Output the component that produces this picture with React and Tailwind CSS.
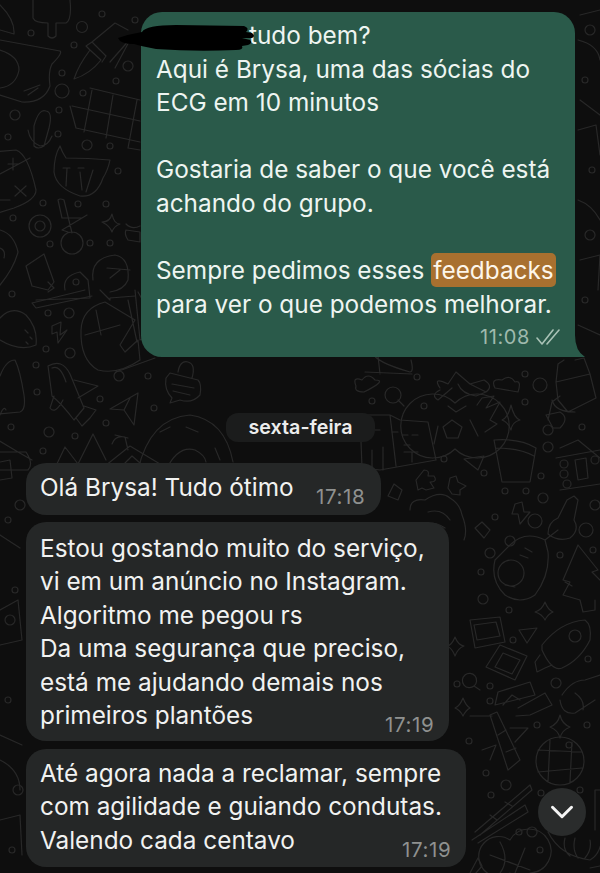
import React from 'react';
import { ChevronDown } from 'lucide-react';

const dots = [
  [82,27,5.5],[31,33,3],[102,14,3],[74,45,3],[62,73,3],[62,91,7],[83,93,3],[135,20,3],[128,66,5],[116,81,3],[59,110,3],[15,115,5],
  [8,137,3],[87,145,5],[110,146,3],[58,134,3],[118,171,3],[43,203,3],[78,204,3],[106,204,3],[13,218,3],[90,243,3],[110,243,3],[50,244,3],
  [76,282,3],[12,294,3],[48,313,3],[69,313,5],[46,349,3],[70,353,5],[36,365,3],[37,392,3],[100,399,3],[119,376,5],[148,376,3],[154,408,3],[11,427,3],[49,432,5],[106,423,3],[75,436,3],[43,451,3],
  [20,505,5],[8,520,3],
  [417,377,3],[372,401,3],[424,406,3],[525,374,3],[540,385,7],[525,402,3],[582,427,3],[548,430,5],[548,447,5],[444,459,3],[484,473,3],[541,476,3],[505,491,3],[526,491,3],[543,498,5],[595,505,5],[495,517,3],[535,521,7],[586,530,7],
  [510,541,5],[490,553,5],[481,572,3],[593,550,3],[560,555,3],[483,599,5],[509,610,3],[513,640,3],[588,659,3],[457,684,3],[490,686,3],[556,683,5],[490,701,3],
  [537,725,3],[587,725,3],[569,745,3],[469,741,3],[486,773,3],[506,785,5],[491,795,3],[580,790,3],[541,793,3],[519,832,3],[532,832,5],[540,850,3],
  [590,30,5],[585,80,3],[592,170,3],[590,235,5],[585,300,3],[10,620,5],[15,590,3],[8,700,3],[18,790,5],[12,850,3],
];

const paths = [
  // lightbulb, nib, popsicle
  'M0 40 L60 51 Q63 53 52 64 Q48 72 50 86 Q44 103 22 102 L0 95',
  'M0 50 Q19 56 19 70 Q16 86 0 88 M24 91 L40 85 M28 95 L38 88',
  'M74 79 Q78 66 90 50 L101 60 Q90 74 74 79 M90 50 L86 46 L92 42 L106 56 L102 62 M92 42 L115 23 L128 30 M110 62 L131 38 L115 68',
  'M33 0 L33 18 Q35 23 48 23 L48 36 Q52 40 56 36 L56 23 L66 23 Q72 20 70 0',
  'M0 5 Q15 20 14 34 L0 30',
  // grid
  'M90 88 L140 100 M72 106 L140 121 M70 106 L76 128 L140 142 M92 90 L84 132 M113 95 L106 138 M137 100 L128 148 L140 150',
  // mic, cat
  'M34 126 Q39 108 46 111 Q53 112 49 128 L44 146 Q38 150 34 146 Z M28 130 Q30 142 40 146 Q48 146 52 136',
  'M60 146 Q62 152 66 158 Q88 158 110 160 Q108 170 103 178 Q96 198 80 196 Q56 188 54 172 Q54 156 60 146 M63 168 L70 168 M67 168 L66 186 M78 168 L84 168 M93 170 L86 192 M80 172 L82 190',
  // calculator
  'M-8 152 L16 150 Q28 154 36 190 Q36 200 14 208 L-8 215 M0 174 L30 158 M13 158 L13 170 M8 164 L18 164 M15 186 L26 196 M26 186 L15 196 M0 200 L10 200',
  // scissors
  'M58 200 L62 218 L82 218 L87 215 L62 230 L68 232 M58 200 Q60 198 64 200 L72 233 M40 215 A11 11 0 1 0 40 237 A11 11 0 1 0 40 215 M40 221 A5 5 0 1 0 40 231 A5 5 0 1 0 40 221 M72 232 A11 11 0 1 0 72 254 A11 11 0 1 0 72 232',
  'M112 214 Q114 224 120 224 Q114 226 112 232 Q110 226 102 222 Q110 222 112 214',
  'M126 224 Q132 230 140 226 M126 230 L140 232 L140 242 L128 240 Q124 234 126 230',
  // paw
  'M0 230 Q14 234 18 252 Q14 268 0 285 M0 248 Q6 250 4 258',
  // tube
  'M26 266 L44 254 L54 282 L48 290 L32 286 Z M48 282 L54 288 L48 292',
  // lady
  'M93 280 Q90 258 115 255 Q130 258 128 280 Q124 290 110 292 M107 268 L130 270 M110 278 L120 270',
  'M65 290 Q62 276 80 272 L88 280 L90 298 L36 300',
  // taco, bolt
  'M0 318 Q12 305 26 315 Q38 328 36 345 Q20 352 0 340 M25 330 L28 333 M30 337 L32 339 M26 342 L28 344',
  'M52 326 L61 322 L60 335 L67 330 L58 343 L57 332 L52 334 Z',
  // top mouse block
  'M32 303 L85 290 M32 303 L36 308 L92 296',
  'M100 290 L110 300 L110 298 L135 296 M105 302 Q82 308 81 330 Q80 360 98 370 Q118 375 140 360 L138 340 L125 352 L120 345 L135 320 L115 308 Z M85 335 L120 325 M96 310 L101 335 M128 300 L137 342',
  'M135 290 L140 340 L160 330 L138 292',
  'M116 372 L155 358',
  // rocket
  'M48 366 Q62 358 70 374 L84 408 L74 420 Q62 404 52 396 Z M52 368 Q60 364 66 382 M74 380 L98 386 L78 398 M54 396 L50 408 Q55 415 63 400 M76 418 L82 426 L90 418 L96 410 L84 406',
  'M0 376 Q6 360 15 360 Q20 370 24 395 Q26 410 20 412 L-2 414 M0 415 Q4 405 6 410',
  // plane
  'M110 409 L138 393 L134 425 L124 410 Z M124 410 L130 398',
  // chat lock
  'M170 373 L198 380 Q202 384 200 395 Q192 404 180 400 L170 403 L172 398 Q164 390 166 378 Z M172 384 L194 388 M173 391 L190 395 M178 372 Q180 360 188 362 Q196 364 192 378',
  // rings
  'M138 470 Q150 418 190 415 Q225 420 233 462 M160 432 L170 427 M186 427 L198 432 M215 448 L220 460 M166 470 Q178 445 195 450 Q205 455 206 462',
  // house + mountains
  'M100 470 L130 446 L170 470 M118 470 L132 456 L148 470 M54 470 L65 447 L78 464 L93 434 L106 460 M112 444 Q115 435 125 437 L128 450 M115 435 L128 438',
  'M-2 440 L18 452 L32 460 M0 452 L26 452 Q34 464 28 470 L0 470 M0 462 L10 460 L12 478 L0 480',
  // top right of date band
  'M373 353 Q375 362 410 372 Q414 372 411 360 M378 356 L380 374 M365 372 L412 374',
  'M356 386 Q352 376 362 380 Q368 372 375 380 Q388 380 364 392 Q354 392 356 386',
  'M393 387 A8 8 0 1 0 393 403 A8 8 0 1 0 393 387 M398 400 L404 406',
  'M440 388 Q432 376 448 384 L456 372 L470 384 L484 380 Q494 386 486 392 L470 384 M440 390 Q430 395 438 400 L452 388 M486 392 L476 396 Q462 394 458 384',
  'M495 388 Q490 378 502 380 Q510 374 515 382 Q522 380 518 392 Z',
  // football
  'M455 403 A32 32 0 1 0 455 449 A32 32 0 1 0 455 403 Z M452 420 L462 427 L458 438 L447 438 L443 427 Z M448 406 L456 412 L466 406 M470 420 L478 436 M438 426 L434 444 M477 405 L482 398 L494 396 L486 408 L500 402 L490 420 L497 424 L485 432',
  'M511 405 Q514 418 520 420 Q512 422 511 430 Q508 422 502 420 Q508 418 511 405',
  'M548 420 L552 402 L560 396 M553 428 L546 415 L560 412 Q570 418 560 428 Z',
  // bottle + banana
  'M556 382 L558 364 L564 360 M556 382 L590 374 L596 398 L568 412 L558 400 Z M575 360 L584 358 L590 374 M552 400 Q555 412 575 412',
  // building
  'M360 415 L390 415 L400 420 L428 422 L436 460 L380 470 L362 468 Z M390 415 L396 466 M372 450 L372 470 M383 447 L383 470 M412 452 L412 462 M404 452 L418 452',
  'M375 430 L380 430 M392 432 L398 432 M402 435 L408 435 M412 435 L418 435 M404 445 L410 445',
  // pot, plane, cross
  'M494 440 Q520 438 536 448 L530 482 L502 482 Z M496 448 Q520 448 534 456',
  'M464 459 L484 456 L478 470 Z',
  'M450 478 L456 476 L458 482 L466 486 L460 490 L460 495 L452 494 L448 488 Z',
  'M424 470 Q430 470 428 476 L434 476 Q438 482 430 482 L434 488 L426 490 L422 488 L418 490 L416 480 Z',
  // house logs
  'M560 448 L578 440 L600 458 M556 458 L600 450 M560 490 L600 484 M575 460 L586 458 L588 478 L578 480 Z',
  'M564 460 A4 4 0 1 0 564 468 A4 4 0 1 0 564 460 M564 470 A4 4 0 1 0 564 478 A4 4 0 1 0 564 470 M567 480 A4 4 0 1 0 567 488 A4 4 0 1 0 567 480 M595 456 A4 4 0 1 0 595 464 A4 4 0 1 0 595 456',
  // die, big flower
  'M394 484 L402 490 L398 500 L388 496 Z',
  'M410 510 Q410 498 425 500 Q440 490 450 498 Q460 504 462 515 Q468 530 464 540 M428 512 Q442 508 450 520 M420 530 Q430 518 445 528',
  'M515 504 L522 502 L524 512 L530 512 L520 524 L518 514 L512 514 Z',
  'M567 500 L574 496 L578 500 L574 520 Q580 530 570 538 Q558 542 548 534 Q548 522 558 518 Z',
  'M475 528 L482 522 L490 530 L484 538 Z',
  // avocado
  'M545 540 Q525 530 510 545 L495 560 Q490 580 505 595 Q520 605 535 595 Q550 575 548 552 Z M545 540 L558 530 M498 573 A13 13 0 1 0 524 573 A13 13 0 1 0 498 573 M520 555 L528 558 M525 548 L532 552 M505 585 L515 587',
  'M578 545 L598 570 L592 572 L600 580 M578 545 L563 580 L570 582 L563 595 L580 600 L583 612 L595 610 L595 600 M565 582 L572 586',
  'M545 602 Q548 610 553 612 Q548 614 545 620 Q542 614 535 612 Q542 610 545 602',
  // photos
  'M470 620 L500 617 L505 642 L475 648 Z M474 625 L496 622 L500 636 L477 640 Z',
  'M500 645 L527 656 L515 680 L486 667 Z M503 653 L520 660 L512 674 L495 667 Z',
  'M519 630 L537 628 L527 643 Z',
  'M455 637 Q458 645 464 646 Q458 648 455 656 Q452 648 447 646 Q452 645 455 637',
  'M465 675 A7 7 0 1 0 474 686 A7 7 0 1 0 465 675 M474 686 L480 690',
  'M498 692 L530 682 L535 695 L495 705 Z M503 705 L512 695 L520 700',
  'M518 708 L545 693 L552 705 L530 715 L516 716',
  'M463 698 Q466 706 470 708 Q466 710 463 716 Q460 710 455 708 Q460 706 463 698',
  // rocket right
  'M542 645 Q560 622 585 620 Q592 625 590 640 Q580 660 562 668 Q552 672 542 650 Z M575 630 A6 6 0 1 0 575 642 A6 6 0 1 0 575 630 M540 655 L535 662 L537 672 L545 668 L552 665',
  // heart / sock
  'M562 695 Q572 680 585 680 L600 675 M560 700 Q562 715 575 713 L595 700 M575 693 Q585 700 583 710',
  // bamboo + star
  'M490 715 L497 712 L520 760 L508 770 Z M498 735 L506 730 M506 752 L516 748 M470 716 L492 716 M482 750 L496 745 L490 760 M510 728 L528 728 L515 742',
  'M560 715 Q562 724 570 727 Q562 730 560 738 Q558 730 550 727 Q558 724 560 715',
  'M600 790 L595 790 L595 830',
  // globe
  'M560 737 A24 24 0 1 0 560 785 A24 24 0 1 0 560 737 M538 750 L582 752 M538 772 L582 768 M550 740 L548 782 M572 742 L570 782',
  // chopsticks + basketball
  'M475 832 L530 785 L532 790 L480 835 M472 840 L525 805 L528 812 L478 843 M505 802 L512 806 M490 815 L497 820',
  'M510 840 A20 20 0 1 0 510 873 M510 840 A22 22 0 1 1 530 873 M490 855 L530 870 M500 842 Q510 860 500 873 M525 848 L515 873',
  'M470 873 L478 858 L482 866 L476 873',
  'M548 832 Q560 856 590 860 Q600 855 602 838 M565 838 Q562 850 570 856 M575 838 Q572 850 578 858 M590 840 Q592 850 585 858',
  'M590 868 L600 866',
  // left strip low
  'M0 535 L20 548 M0 610 L18 600 L22 640 L0 645 M0 735 L22 745 M0 760 Q20 770 20 790 M0 820 L20 815 L22 855',
  // right strip high
  'M580 15 L600 10 M578 40 Q598 45 600 60 M580 100 L600 115 M578 130 L596 125 L600 155 M578 200 Q592 205 600 220 M580 260 L600 255 L598 290 M578 325 L600 335',
];

const Msg = ({ time, className, timeClass, lines }) => (
  <div className={`ml-[26px] bg-[#252727] rounded-[20px] pl-[15px] relative ${className}`}>
    {lines.map((l) => (
      <div key={l} className="h-[33.4px] leading-[33.4px] whitespace-nowrap -ml-[1px]">{l}</div>
    ))}
    <span className={`absolute text-[20.5px] tracking-[0.6px] leading-[25px] text-[#8f9190] ${timeClass}`}>{time}</span>
  </div>
);

export default function App() {
  return (
    <div
      className="relative w-[600px] h-[873px] overflow-hidden bg-[#0e0e0e] text-[24.35px] text-[#f1f2f1] flex flex-col items-start"
      style={{ fontFamily: 'Inter, "Liberation Sans", sans-serif' }}
    >
      {/* wallpaper */}
      <svg className="absolute inset-0" width="600" height="873" fill="none" stroke="#282828" strokeWidth="1.2" strokeLinecap="round" strokeLinejoin="round">
        {paths.map((d, i) => <path key={i} d={d} />)}
        {dots.map(([x, y, r], i) => <circle key={i} cx={x} cy={y} r={r} />)}
      </svg>

      {/* outgoing */}
      <div className="relative self-end mr-[25px] mt-[12px] w-[434px] h-[345px] bg-[#2a5a4a] rounded-[21px] pl-[15px] pt-[7px] text-[#eef5f1]">
        <svg className="absolute right-[-10px] bottom-0" width="30" height="22" viewBox="0 0 30 22">
          <path d="M0 0 L20 0 Q20 16 30 22 L0 22 Z" fill="#2a5a4a" />
        </svg>
        <div className="relative whitespace-nowrap">
          <div className="h-[33.6px] leading-[33.6px] pl-[93px]">tudo bem?</div>
          <div className="h-[33.6px] leading-[33.6px]">Aqui é Brysa, uma das sócias do</div>
          <div className="h-[33.6px] leading-[33.6px]">ECG em 10 minutos</div>
          <div className="h-[33.6px]"></div>
          <div className="h-[33.6px] leading-[33.6px]">Gostaria de saber o que você está</div>
          <div className="h-[33.6px] leading-[33.6px]">achando do grupo.</div>
          <div className="h-[33.6px]"></div>
          <div className="h-[33.6px] leading-[33.6px] relative">
            Sempre pedimos esses{' '}
            <span className="bg-[#a8702f] text-[#fdf6ea] rounded-[5px] px-[2px] py-[2px] ml-[0px]">feedbacks</span>
          </div>
          <div className="h-[33.6px] leading-[33.6px]">para ver o que podemos melhorar.</div>
        </div>
        <div className="absolute right-[15px] bottom-[5px] flex items-center gap-[6px] text-[20px] tracking-[0.6px] text-[#9fb9ad]">
          <span>11:08</span>
          <svg width="24" height="18" viewBox="0 0 24 18" fill="none" stroke="#a9c2b6" strokeWidth="1.6" strokeLinecap="round" strokeLinejoin="round">
            <path d="M1 10 L6 16 L17 2" />
            <path d="M11 16 L23 2" />
          </svg>
        </div>
      </div>

      {/* redacted name */}
      <svg className="absolute left-[116px] top-[22px]" width="145" height="32" viewBox="0 0 145 32">
        <path d="M2 16 Q14 12 26 10 Q30 3 60 3 L128 4 Q134 6 130 10 L136 11 Q140 14 136 16 L126 16 L134 18 Q137 21 132 23 L126 24 Q128 28 120 28 Q80 30 40 27 Q24 24 18 22 Q4 22 2 16 Z" fill="#000" />
      </svg>

      {/* date */}
      <div className="relative self-start ml-[226px] mt-[56px] w-[149px] h-[29px] rounded-[12px] bg-[#1b1c1c] flex items-center justify-center text-[19.7px] font-semibold text-[#eceded]">
        sexta-feira
      </div>

      <Msg
        className="mt-[21px] w-[355px] h-[52px] pt-[8px]"
        timeClass="left-[290px] top-[21px]"
        time="17:18"
        lines={['Olá Brysa! Tudo ótimo']}
      />
      <Msg
        className="mt-[7px] w-[423px] h-[219px] pt-[10px]"
        timeClass="left-[359px] top-[190px]"
        time="17:19"
        lines={[
          'Estou gostando muito do serviço,',
          'vi em um anúncio no Instagram.',
          'Algoritmo me pegou rs',
          'Da uma segurança que preciso,',
          'está me ajudando demais nos',
          'primeiros plantões',
        ]}
      />
      <Msg
        className="mt-[8px] w-[440px] h-[118px] pt-[8px]"
        timeClass="left-[376px] top-[88px]"
        time="17:19"
        lines={[
          'Até agora nada a reclamar, sempre',
          'com agilidade e guiando condutas.',
          'Valendo cada centavo',
        ]}
      />

      {/* scroll to bottom */}
      <div className="absolute left-[538px] top-[788px] w-[48px] h-[48px] rounded-full bg-[#2a2c2c] flex items-center justify-center">
        <ChevronDown size={38} strokeWidth={1.9} color="#f4f4f4" />
      </div>
    </div>
  );
}
